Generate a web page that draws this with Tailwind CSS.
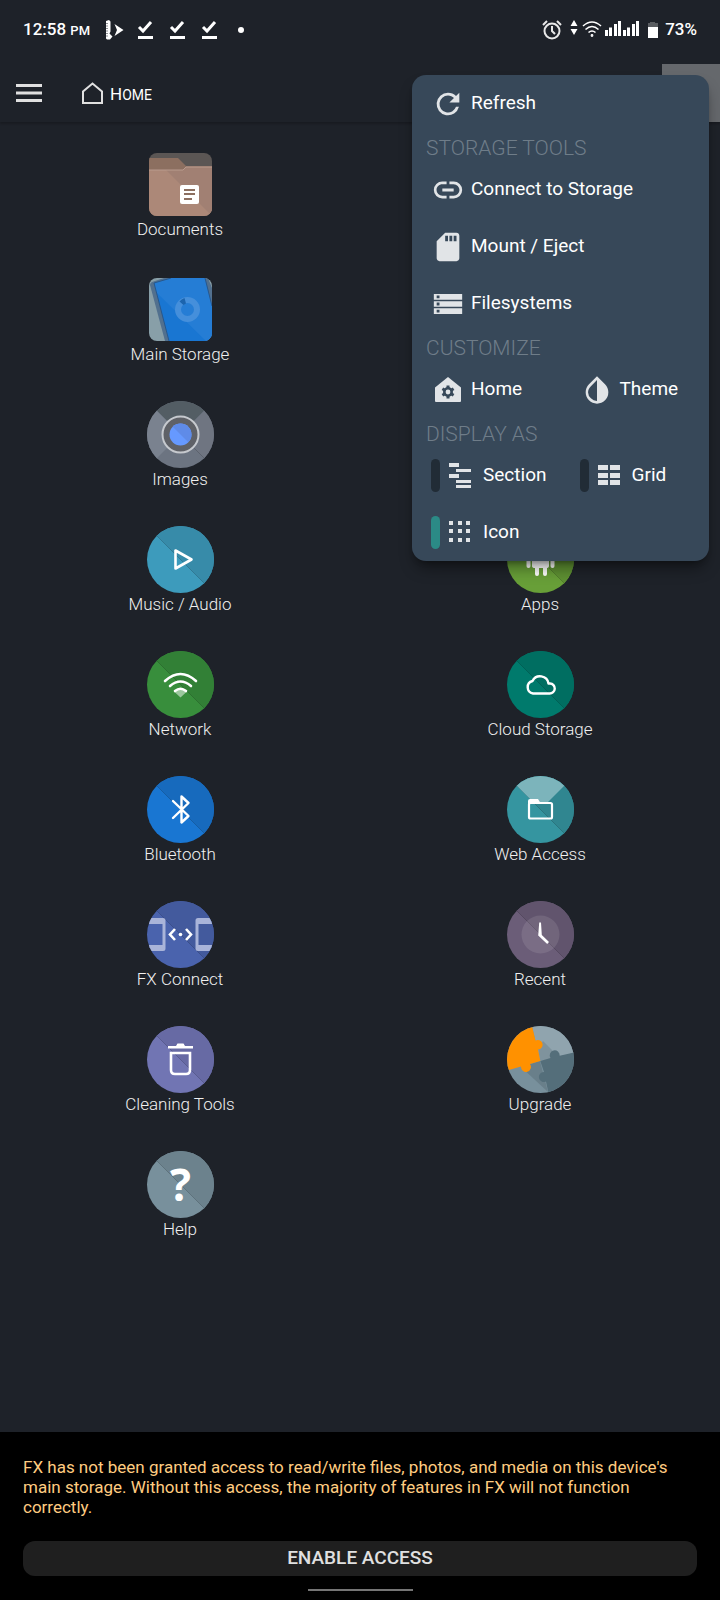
<!DOCTYPE html>
<html lang="en">
<head>
  <meta charset="UTF-8">
  <meta name="viewport" content="width=device-width, initial-scale=1.0">
  <title>FX - Home</title>
  <script src="https://cdn.jsdelivr.net/npm/@tailwindcss/browser@4"></script>
</head>
<body class="relative flex flex-col min-h-screen bg-[#1e2229] text-white font-[Roboto,sans-serif]">
  <!-- Status bar -->
  <div class="flex items-center h-16 px-[23px] pb-1 text-[17px] font-medium">
    <span>12:58 <span class="text-[13px]">PM</span></span>
    <svg class="ml-3.5 w-5 h-5" viewBox="0 0 20 20" fill="#fff"><path d="M2 1l3-1 1.500 1.500v10l-1 2 3 3-2.500 3H3l-1-1z"/><path d="M10.500 4l9 6-9 6 2.500-6z"/><path d="M3 3v14" stroke="#1e2229" stroke-dasharray="1 1.500" fill="none"/></svg>
    <svg class="ml-3 size-5" viewBox="0 0 20 20"><path d="M3 7l4 4 8-9" fill="none" stroke="#fff" stroke-width="3"/><path d="M2 16h15v3H2z" fill="#fff"/></svg>
    <svg class="ml-3 size-5" viewBox="0 0 20 20"><path d="M3 7l4 4 8-9" fill="none" stroke="#fff" stroke-width="3"/><path d="M2 16h15v3H2z" fill="#fff"/></svg>
    <svg class="ml-3 size-5" viewBox="0 0 20 20"><path d="M3 7l4 4 8-9" fill="none" stroke="#fff" stroke-width="3"/><path d="M2 16h15v3H2z" fill="#fff"/></svg>
    <span class="ml-[18px] size-1.5 rounded-full bg-white"></span>
    <svg class="ml-auto size-5" viewBox="0 0 20 20" fill="none" stroke="#e8e8e8" stroke-width="2"><circle cx="10" cy="11" r="7.500"/><path d="M10 6v5l3 3M1 5l4-4M19 5l-4-4"/></svg>
    <svg class="ml-2 w-2 h-5" viewBox="0 0 8 20" fill="#fff"><path d="M4 0l3.500 6h-7zM4 15l3.500-6h-7z"/></svg>
    <svg class="ml-1 w-5 h-5" viewBox="0 0 20 20" fill="none" stroke="#fff" stroke-width="1.600"><path d="M1 6q9-8 18 0M3.500 9.500q6.500-6 13 0M6.500 12.500q3.500-3 7 0"/><circle cx="10" cy="15.500" r=".6"/></svg>
    <svg class="ml-[3px] w-[34px] h-5" viewBox="0 0 34 20" fill="#fff"><path d="M0 10h3v6H0zM4 7.500h3V16H4zM9 4h3v12H9zM13 1h3v15h-3zM18 10h3v6h-3zM22 7.500h3V16h-3zM27 4h3v12h-3zM31 1h3v15h-3z"/></svg>
    <svg class="ml-2 w-3 h-5" viewBox="0 0 12 20"><path d="M3 2h5v1h3v4H1V3h2z" fill="#595c60"/><path d="M1 7h10v11H1z" fill="#fff"/></svg>
    <span class="ml-1.5">73%</span>
  </div>

  <!-- App bar -->
  <header class="flex items-center h-[58px] pl-4 shadow-[0_2px_2px_rgba(0,0,0,0.2)]">
    <button aria-label="Open menu">
      <svg class="w-[26px] h-[18px]" viewBox="0 0 26 18" fill="#e0e0e0"><path d="M0 0h26v3H0zM0 7.500h26v3H0zM0 15h26v3H0z"/></svg>
    </button>
    <a href="#" class="flex items-center ml-10 text-[17px] leading-6">
      <svg class="w-[21px] h-[22px] mr-[7px]" viewBox="0 0 21 22" fill="none" stroke="#e0e0e0" stroke-width="2"><path d="M1 21V9.500L10.500 1.500 20 9.500V21z"/></svg>
      <span class="pt-0.5">H<span class="text-[14px]">OME</span></span>
    </a>
    <button aria-label="Options" class="ml-auto self-stretch w-[58px] bg-[#65686c]"></button>
  </header>

  <!-- Home tiles -->
  <main class="grow grid grid-cols-2 auto-rows-[125px] pt-[29px] text-[17px] leading-[22px] font-light text-[#f0f0f0]">
    <a href="#" class="col-start-1 flex flex-col items-center">
      <svg class="size-[63px] m-0.5 rounded-lg bg-[#5b5654]" viewBox="0 0 63 63">
        <path d="M0 5h29l8 8h26v50H0z" fill="#8c6f60"/>
        <path d="M0 17h34l3-3h26v49H0z" fill="#ac8878"/>
        <path d="M17 17h17l3-3h26v49z" fill="#a18073"/>
        <path d="M0 17h34l3-3h26" fill="none" stroke="#b99b8e"/>
        <rect x="31" y="32" width="19" height="19" rx="2" fill="#fff"/>
        <path d="M35 36h11v2H35zM35 40h11v2H35zM35 45h8v2h-8z" fill="#8c6f60"/>
      </svg>
      Documents
    </a>
    <a href="#" class="col-start-1 flex flex-col items-center">
      <svg class="size-[63px] m-0.5 rounded-lg bg-[#889fa8]" viewBox="0 0 63 63">
        <path d="M1 7q0-2 2-3L15 0h44l4 10v53H16z" fill="#52708e"/>
        <path d="M5 5L22 0h34l7 28v35H20z" fill="#1976d2"/>
        <path d="M5 5L22 0h34l7 28v35h-6L7 14z" fill="#257dd5"/>
        <path d="M20 63L5 5 22 0M56 0l7 28" fill="none" stroke="#29578a"/>
        <circle cx="38.500" cy="31.500" r="9.500" fill="none" stroke="#458fdb" stroke-width="6"/>
        <path d="M30.500 23.500q2-2.500 5-3.500l1.500 5.500q-1.500.5-2.500 1.500z" fill="#1b64ae"/>
      </svg>
      Main Storage
    </a>
    <a href="#" class="col-start-1 flex flex-col items-center">
      <svg class="size-[67px] rounded-full bg-[#6c7481]" viewBox="0 0 67 67">
        <path d="M0 0h67L33.500 33.500z" fill="#535d64"/>
        <path d="M0 0l33.500 33.500L0 67z" fill="#7a828f"/>
        <path d="M67 0v67L33.500 33.500z" fill="#6f7581"/>
        <path d="M33.500 33.500L67 67" stroke="#5c626d"/>
        <circle cx="33.500" cy="33.500" r="18" fill="#5f6167" stroke="#c6c9ce" stroke-width="2"/>
        <circle cx="33.500" cy="33.500" r="11" fill="#6699ff"/>
        <path d="M25.700 25.700a11 11 0 0 1 15.600 15.600z" fill="#5f8be8"/>
      </svg>
      Images
    </a>
    <a href="#" class="col-start-1 flex flex-col items-center">
      <svg class="size-[67px] rounded-full bg-[#3d9bbc]" viewBox="0 0 67 67">
        <path d="M0 0h67v67z" fill="#378ba9"/><path d="M0 0l67 67" stroke="#2d6f87" stroke-width=".7"/>
        <path d="M28.500 24.500v18l16-9z" fill="none" stroke="#fff" stroke-width="2.600" stroke-linejoin="round"/>
      </svg>
      Music / Audio
    </a>
    <a href="#" class="flex flex-col items-center">
      <svg class="size-[67px] rounded-full bg-[#689f38]" viewBox="0 0 67 67">
        <path d="M0 0h67v67z" fill="#5e9032"/><path d="M0 0l67 67" stroke="#4b7328" stroke-width=".7"/>
        <path d="M25 27h17v13q0 2-2 2v6q0 2-2 2t-2-2v-6h-4v6q0 2-2 2t-2-2v-6q-3 0-3-2zM25 25q0-8 8.500-8t8.500 8z" fill="#fff"/>
        <rect x="19.500" y="27" width="4" height="15" rx="2" fill="#fff"/><rect x="43.500" y="27" width="4" height="15" rx="2" fill="#fff"/>
      </svg>
      Apps
    </a>
    <a href="#" class="flex flex-col items-center">
      <svg class="size-[67px] rounded-full bg-[#388e3c]" viewBox="0 0 67 67">
        <path d="M0 0h67v67z" fill="#328036"/><path d="M0 0l67 67" stroke="#28662b" stroke-width=".7"/>
        <path d="M27 40.500q6.500-4.500 13 0L33.500 46.500z" fill="#9cc79e"/>
        <path d="M18 30q15.500-14 31 0M23 35q10.500-9 21 0M28 40q5.500-4.500 11 0" fill="none" stroke="#fff" stroke-width="2.600" stroke-linecap="round"/>
      </svg>
      Network
    </a>
    <a href="#" class="flex flex-col items-center">
      <svg class="size-[67px] rounded-full bg-[#007a6c]" viewBox="0 0 67 67">
        <path d="M0 0h67v67z" fill="#006e61"/><path d="M0 0l67 67" stroke="#00584e" stroke-width=".7"/>
        <path d="M26 42.500h16.500a5 5 0 0 0 .500-10h-1.500a8.500 8.500 0 0 0-16-2.500a6.400 6.400 0 0 0 .500 12.500z" fill="none" stroke="#fff" stroke-width="2.400" stroke-linejoin="round"/>
      </svg>
      Cloud Storage
    </a>
    <a href="#" class="flex flex-col items-center">
      <svg class="size-[67px] rounded-full bg-[#1976d2]" viewBox="0 0 67 67">
        <path d="M0 0h67v67z" fill="#176abd"/><path d="M0 0l67 67" stroke="#145597" stroke-width=".7"/>
        <path d="M26 25l15.500 15-7 6.500V20.500l7 6.500L26 42" fill="none" stroke="#fff" stroke-width="2.400" stroke-linejoin="round" stroke-linecap="round"/>
      </svg>
      Bluetooth
    </a>
    <a href="#" class="flex flex-col items-center">
      <svg class="size-[67px] rounded-full bg-[#3595a0]" viewBox="0 0 67 67">
        <path d="M0 0h67v67z" fill="#308690"/><path d="M0 0l67 67" stroke="#276b73" stroke-width=".7"/>
        <path d="M0 0h67L41 26H26z" fill="#7cb4bb"/>
        <path d="M21 28v-3q0-2 2-2h8l2.500 4z" fill="#fff"/>
        <rect x="22" y="27" width="23" height="15.500" rx="1.500" fill="none" stroke="#fff" stroke-width="2.200"/>
      </svg>
      Web Access
    </a>
    <a href="#" class="flex flex-col items-center">
      <svg class="size-[67px] rounded-full bg-[#4a63ad]" viewBox="0 0 67 67">
        <path d="M0 0h67v67z" fill="#435a9d"/><path d="M0 0l67 67" stroke="#37497f" stroke-width=".7"/>
        <path d="M0 17h16q2.500 0 2.500 2.500v28q0 2.500-2.500 2.500H0v-6h15.500V23H0zM67 17H51q-2.500 0-2.500 2.500v28q0 2.500 2.500 2.500h16v-6H51.500V23H67z" fill="#a9b4d9"/>
        <path d="M28 28l-5 5.500 5 5.500M39 28l5 5.500-5 5.500" fill="none" stroke="#fff" stroke-width="2.600"/>
        <circle cx="33.500" cy="33.500" r="1.800" fill="#fff"/>
      </svg>
      FX Connect
    </a>
    <a href="#" class="flex flex-col items-center">
      <svg class="size-[67px] rounded-full bg-[#6b5d78]" viewBox="0 0 67 67">
        <path d="M0 0h67v67z" fill="#61546d"/><path d="M0 0l67 67" stroke="#4f4459" stroke-width=".7"/>
        <circle cx="33.500" cy="33.500" r="19" fill="#fff" fill-opacity=".1"/>
        <path d="M32.200 21.500h1.800l.8 12.500 7.200 7-1.800 2-9-8.500z" fill="#fff"/>
      </svg>
      Recent
    </a>
    <a href="#" class="flex flex-col items-center">
      <svg class="size-[67px] rounded-full bg-[#7175b3]" viewBox="0 0 67 67">
        <path d="M0 0h67v67z" fill="#676aa4"/><path d="M0 0l67 67" stroke="#525584" stroke-width=".7"/>
        <path d="M24 27h19v17q0 4-4 4H28q-4 0-4-4z" fill="none" stroke="#fff" stroke-width="2.600"/>
        <path d="M21 20h8l1.500-2.500h6L38 20h8v2.500H21z" fill="#fff"/>
      </svg>
      Cleaning Tools
    </a>
    <a href="#" class="flex flex-col items-center">
      <svg class="size-[67px] rounded-full bg-[#78909c]" viewBox="0 0 67 67">
        <path d="M25 0h42v27L33 35z" fill="#90a4ae"/>
        <path d="M31 22l5-7 16 16-19 4z" fill="#7f939d"/>
        <path d="M14 41l19-6 8 31z" fill="#697f8a"/>
        <path d="M33.300 35l10.200-3a5 5 0 1 1 9.200-2.300L67 26.500V67H41.500l-2.500-11.500a5 5 0 1 1-2-9.500z" fill="#546e7a"/>
        <path d="M0 0h25l3.500 14.500a4.800 4.800 0 1 1 2.500 9L33.300 35l-10.300 3a5 5 0 1 1-9 2.500L0 44.500z" fill="#ff9100"/>
      </svg>
      Upgrade
    </a>
    <a href="#" class="flex flex-col items-center">
      <svg class="size-[67px] rounded-full bg-[#78909c]" viewBox="0 0 67 67">
        <path d="M0 0h67v67z" fill="#6c828d"/><path d="M0 0l67 67" stroke="#566871" stroke-width=".7"/>
        <text x="33.500" y="50" text-anchor="middle" class="font-['Open_Sans',sans-serif] text-[44px] font-bold" fill="#fff">?</text>
      </svg>
      Help
    </a>
  </main>

  <!-- Storage permission notice -->
  <footer class="flex flex-col bg-black px-[23px] pt-[25px] pb-[9px]">
    <p class="text-[17px] leading-5 text-[#ffcc80]">FX has not been granted access to read/write files, photos, and media on this device's main storage. Without this access, the majority of features in FX will not function correctly.</p>
    <button class="mt-6 h-[35px] pb-0.5 rounded-xl bg-[#1f1f1f] text-[19px] leading-6 font-medium text-[#e0e0e0]">ENABLE ACCESS</button>
    <div class="mt-[13px] self-center w-[105px] h-0.5 bg-[#757575]"></div>
  </footer>

  <!-- Options menu -->
  <div class="absolute top-[75px] right-[11px] w-[297px] grid grid-cols-2 rounded-[14px] bg-[#374859] text-[19px] shadow-lg shadow-black/40">
    <button class="col-span-2 flex items-center gap-1.5 h-[57px] pl-[19px]">
      <svg class="size-[34px]" viewBox="0 0 24 24" fill="#e1e4e7"><path d="M17.650 6.350A7.960 7.960 0 0 0 12 4a8 8 0 1 0 7.730 10h-2.080A6 6 0 1 1 12 6c1.660 0 3.140.690 4.220 1.780L13 11h7V4z"/></svg>
      Refresh
    </button>
    <h2 class="col-span-2 h-[29px] pl-3.5 leading-[33px] text-[21px] font-light text-[#6f7d89]">STORAGE TOOLS</h2>
    <button class="col-span-2 flex items-center gap-1.5 h-[57px] pl-[19px]">
      <svg class="size-[34px]" viewBox="0 0 24 24" fill="#e1e4e7"><path d="M8 11h8v2H8zM3.900 12c0-2.300 1.800-4.100 4.100-4.100h3V6H8a6 6 0 0 0 0 12h3v-1.900H8A4.100 4.100 0 0 1 3.900 12zM16 6h-3v1.900h3a4.100 4.100 0 0 1 0 8.200h-3V18h3a6 6 0 0 0 0-12z"/></svg>
      Connect to Storage
    </button>
    <button class="col-span-2 flex items-center gap-1.5 h-[57px] pl-[19px]">
      <svg class="size-[34px]" viewBox="0 0 24 24" fill="#e1e4e7"><path d="M18 2h-8L4 8v12c0 1.100.9 2 2 2h12c1.100 0 2-.9 2-2V4c0-1.100-.9-2-2-2zm-6 6h-2V4h2zm3 0h-2V4h2zm3 0h-2V4h2z"/></svg>
      Mount / Eject
    </button>
    <button class="col-span-2 flex items-center gap-1.5 h-[57px] pl-[19px]">
      <svg class="size-[34px]" viewBox="0 0 24 24" fill="#e1e4e7"><path d="M2 19h20v-4H2zm2-3h2v2H4zM2 5v4h20V5zm4 3H4V6h2zm-4 6h20v-4H2zm2-3h2v2H4z"/></svg>
      Filesystems
    </button>
    <h2 class="col-span-2 h-[29px] pl-3.5 leading-[33px] text-[21px] font-light text-[#6f7d89]">CUSTOMIZE</h2>
    <button class="flex items-center gap-1.5 h-[57px] pl-[19px]">
      <svg class="size-[34px]" viewBox="0 0 34 34" fill="#e1e4e7"><path d="M17 4L30 14.500V28q0 1-1 1H5q-1 0-1-1V14.500z"/><g stroke="#374859" fill="none"><circle cx="17" cy="19" r="3.700" stroke-width="2.600"/><path stroke-width="3" d="M17 12.500v3M17 22.500v3M11.400 15.800l2.600 1.500M20 20.700l2.600 1.500M11.400 22.200l2.600-1.500M20 17.300l2.600-1.500"/></g></svg>
      Home
    </button>
    <button class="flex items-center gap-1.5 h-[57px] pl-[19px]">
      <svg class="size-[34px]" viewBox="0 0 24 24" fill="#e1e4e7"><path d="M17.660 8L12 2.350 6.340 8A8.020 8.020 0 0 0 4 13.640c0 2 .780 4.110 2.340 5.670a7.990 7.990 0 0 0 11.320 0A8.030 8.030 0 0 0 20 13.640C20 11.640 19.220 9.560 17.660 8zM12 19.700a6 6 0 0 1-4.300-1.800A6 6 0 0 1 5.700 13.700c0-1.700.6-3 2-4.400L12 5z"/></svg>
      Theme
    </button>
    <h2 class="col-span-2 h-[29px] pl-3.5 leading-[33px] text-[21px] font-light text-[#6f7d89]">DISPLAY AS</h2>
    <label class="flex items-center h-[57px] pl-[19px]">
      <input type="radio" name="display" class="appearance-none w-[9px] h-[33px] mr-[3px] rounded-full bg-[#212c36] checked:bg-[#2b8a86]">
      <svg class="size-[34px] mr-1.5" viewBox="0 0 34 34" fill="#e1e4e7"><path d="M6 4h10v4H6zM13 10h15v3H13zM6 15h10v4H6zM13 21h15v3H13zM13 26h15v3H13z"/></svg>
      Section
    </label>
    <label class="flex items-center h-[57px] pl-[19px]">
      <input type="radio" name="display" class="appearance-none w-[9px] h-[33px] mr-[3px] rounded-full bg-[#212c36] checked:bg-[#2b8a86]">
      <svg class="size-[34px] mr-1.5" viewBox="0 0 34 34" fill="#e1e4e7"><path d="M6 6h10v5H6zM18 6h10v5H18zM6 14h10v5H6zM18 14h10v5H18zM6 21h10v5H6zM18 21h10v5H18z"/></svg>
      Grid
    </label>
    <label class="flex items-center h-[57px] pl-[19px]">
      <input type="radio" name="display" checked class="appearance-none w-[9px] h-[33px] mr-[3px] rounded-full bg-[#212c36] checked:bg-[#2b8a86]">
      <svg class="size-[34px] mr-1.5" viewBox="0 0 34 34" fill="#e1e4e7"><path d="M6 5h4v4H6zM15 5h4v4h-4zM23 5h4v4h-4zM6 13h4v4H6zM15 13h4v4h-4zM23 13h4v4h-4zM6 22h4v4H6zM15 22h4v4h-4zM23 22h4v4h-4z"/></svg>
      Icon
    </label>
  </div>
</body>
</html>
